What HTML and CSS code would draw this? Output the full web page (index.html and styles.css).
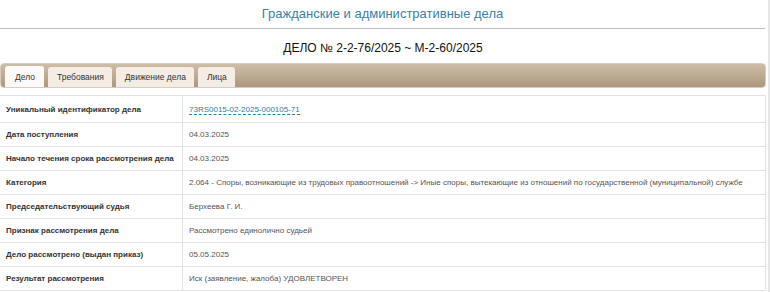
FILE: index.html
```html
<!DOCTYPE html>
<html lang="ru">
<head>
<meta charset="utf-8">
<title>Гражданские и административные дела</title>
<link rel="stylesheet" href="styles.css">
</head>
<body>
<div class="page">
  <div class="inner">
    <div class="section-title">Гражданские и административные дела</div>
    <div class="case-title">ДЕЛО № 2-2-76/2025 ~ М-2-60/2025</div>
    <div class="tabs">
      <div class="tab active">Дело</div>
      <div class="tab">Требования</div>
      <div class="tab">Движение дела</div>
      <div class="tab">Лица</div>
    </div>
    <table class="info">
      <tr class="first"><td class="label">Уникальный идентификатор дела</td><td class="value"><a class="uid" href="#">73RS0015-02-2025-000105-71</a></td></tr>
      <tr><td class="label">Дата поступления</td><td class="value">04.03.2025</td></tr>
      <tr><td class="label">Начало течения срока рассмотрения дела</td><td class="value">04.03.2025</td></tr>
      <tr><td class="label">Категория</td><td class="value">2.064 - Споры, возникающие из трудовых правоотношений -&gt; Иные споры, вытекающие из отношений по государственной (муниципальной) службе</td></tr>
      <tr><td class="label">Председательствующий судья</td><td class="value">Берхеева Г. И.</td></tr>
      <tr><td class="label">Признак рассмотрения дела</td><td class="value">Рассмотрено единолично судьей</td></tr>
      <tr><td class="label">Дело рассмотрено (выдан приказ)</td><td class="value">05.05.2025</td></tr>
      <tr><td class="label">Результат рассмотрения</td><td class="value">Иск (заявление, жалоба) УДОВЛЕТВОРЕН</td></tr>
    </table>
  </div>
</div>
</body>
</html>
```
FILE: styles.css
```css
html, body {
  margin: 0;
  padding: 0;
  background: #fff;
}
body {
  font-family: "Liberation Sans", Arial, sans-serif;
  color: #333;
}
.page {
  width: 770px;
  height: 292px;
  box-sizing: border-box;
  border-right: 2px solid #e6e6e6;
  overflow: hidden;
}
.inner {
  width: 766px;
}
.section-title {
  height: 28px;
  line-height: 28px;
  text-align: center;
  font-size: 13px;
  color: #3a7fa6;
  border-bottom: 1px solid #bdbdbd;
  width: 765px;
}
.case-title {
  height: 34px;
  line-height: 38px;
  text-align: center;
  font-size: 12px;
  color: #111;
}
.tabs {
  height: 25px;
  box-sizing: border-box;
  padding: 3px 0 0 4px;
  display: flex;
  gap: 4px;
  align-items: flex-end;
  border-radius: 4px;
  background: linear-gradient(#cdbea9, #ae977a);
  border: 1px solid #d8ccbc;
}
.tab {
  height: 20px;
  line-height: 20px;
  padding: 0 8px 0 9px;
  font-size: 8.5px;
  color: #333;
  background: #f3ede5;
  border-radius: 3px 3px 0 0;
  box-sizing: border-box;
}
.tab.active {
  background: #fbfaf8;
  height: 21px;
  line-height: 22px;
  padding: 0 9px 0 10px;
}
.info {
  margin-top: 7px;
  width: 766px;
  border-collapse: collapse;
  font-size: 8px;
}
.info td {
  border: 1px solid #e1e1e1;
  height: 23px;
  padding: 0;
  vertical-align: middle;
}
.info tr:first-child td {
  height: 26px;
}
.info td.label {
  width: 176px;
  padding-left: 6px;
  font-weight: bold;
  color: #333;
  border-left: none;
}
.info td.value {
  padding-left: 6px;
  color: #555;
}
.uid {
  color: #2f7aa8;
  text-decoration: none;
  border-bottom: 1px dashed #2f7aa8;
}
```
